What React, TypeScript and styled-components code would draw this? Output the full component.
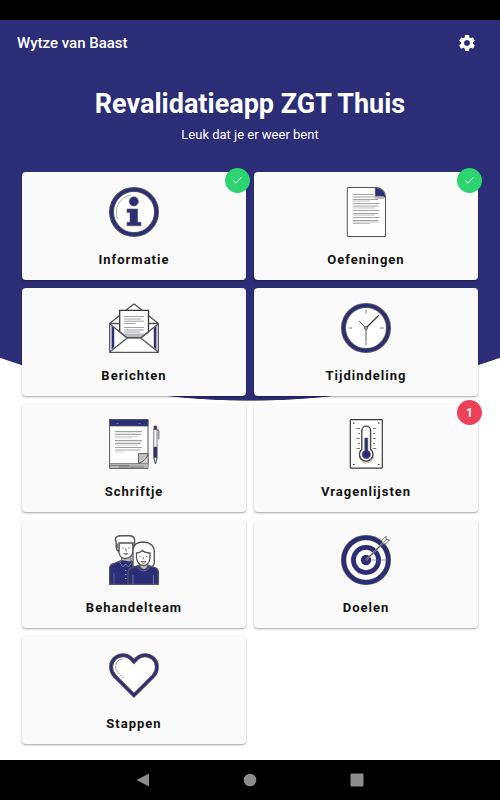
import React from "react";
import styled, { createGlobalStyle } from "styled-components";
import { MdSettings } from "react-icons/md";

const NAVY = "#2b2d77";
const INK = "#55555a";

const GlobalStyle = createGlobalStyle`
  *, *::before, *::after { box-sizing: border-box; }
  body {
    margin: 0;
    background: #000;
    font-family: Roboto, "Liberation Sans", sans-serif;
  }
  button { font: inherit; border: 0; padding: 0; background: none; cursor: pointer; }
`;

const Screen = styled.div`
  display: flex;
  flex-direction: column;
  min-height: 100vh;
`;

const StatusBar = styled.div`
  height: 20px;
  background: #000;
`;

const Main = styled.main`
  flex: 1;
  padding-bottom: 16px;
  background: radial-gradient(ellipse 150% 749px at 50% -368px, ${NAVY} 99.9%, #fff 100%);
`;

const TopBar = styled.header`
  display: flex;
  align-items: center;
  justify-content: space-between;
  height: 46px;
  padding: 0 23px 0 17px;
  color: #fff;
`;

const UserName = styled.span`
  font-size: 15px;
  line-height: 20px;
  font-weight: 500;
`;

const IconButton = styled.button`
  display: flex;
  color: #fff;
`;

const Intro = styled.section`
  padding-top: 22px;
  text-align: center;
  color: #fff;
`;

const Title = styled.h1`
  margin: 0;
  font-size: 27px;
  line-height: 32px;
  font-weight: 700;
`;

const Subtitle = styled.p`
  margin: 5px 0 0;
  font-size: 13px;
  line-height: 20px;
`;

const Grid = styled.nav`
  display: grid;
  grid-template-columns: 1fr 1fr;
  gap: 8px;
  padding: 27px 22px 0;
`;

const Card = styled.button`
  position: relative;
  display: flex;
  flex-direction: column;
  align-items: center;
  gap: 14px;
  height: 108px;
  padding-top: 15px;
  border-radius: 4px;
  background: #fafafa;
  box-shadow: 0 1px 2px rgba(0, 0, 0, 0.36);
`;

const CardLabel = styled.span`
  font-size: 13px;
  line-height: 18px;
  font-weight: 700;
  letter-spacing: 1px;
  color: #111;
`;

const Badge = styled.span<{ $color: string }>`
  position: absolute;
  top: -4px;
  right: -4px;
  display: flex;
  align-items: center;
  justify-content: center;
  width: 25px;
  height: 25px;
  border-radius: 50%;
  background: ${(p) => p.$color};
  color: #fff;
  font-size: 12px;
  font-weight: 700;
`;

const NavBar = styled.footer`
  display: flex;
  align-items: center;
  justify-content: center;
  gap: 93px;
  height: 40px;
  background: #000;
`;

const NavButton = styled.button`
  display: flex;
`;

const Drawing = styled.svg`
  display: block;
  width: 50px;
  height: 50px;
  overflow: visible;
`;

function Art({ children }: { children: React.ReactNode }) {
  return (
    <Drawing viewBox="0 0 50 50" fill="none" stroke={INK} aria-hidden="true">
      {children}
    </Drawing>
  );
}

const Ring = () => (
  <>
    <circle cx="25" cy="25" r="22.5" fill="#fff" stroke={INK} strokeWidth="5" />
    <circle cx="25" cy="25" r="22.5" stroke={NAVY} strokeWidth="3" />
  </>
);

const InfoIcon = () => (
  <Art>
    <Ring />
    <path d="M8.6 32A17.5 17.5 0 0 1 22 8" stroke="#777" strokeWidth=".6" />
    <circle cx="24.8" cy="14.4" r="4.6" fill={NAVY} strokeWidth=".6" />
    <path d="M18 22H28.6V35.3H32V38.8H18V35.3H21V25.4H18Z" fill={NAVY} strokeWidth=".6" />
  </Art>
);

const PageIcon = () => (
  <Art>
    <path d="M6.3.5H35Q44.5 1 44.5 11V49.5H6.3Z" fill="#fff" />
    <path d="M34.2.8Q43.6 1 44.4 10.5Q40 8.5 34.2 9.5Z" fill={NAVY} strokeWidth=".5" />
    <path d="M34 9.5H43V12H34Z" fill="#bbb" stroke="none" />
    <g stroke="#a4a4a4">
      <path d="M11.7 7.5H33M11.7 10H34M11.7 12.5H37M11.7 16.5H38.7M11.7 19H37.5M11.7 23.5H38.7M11.7 26.5H37.5M11.7 30.5H38.7M11.7 33.5H37.5" />
      <path d="M11.7 14H29M11.7 21H34M11.7 28H34M11.7 35H38M11.7 36.5H29" strokeWidth=".7" />
    </g>
  </Art>
);

const EnvelopeIcon = () => (
  <Art>
    <path d="M.7 20.5L23.5 2Q25 .5 26.5 2L49.3 20.5V49.3H.7Z" fill="#fff" strokeWidth="1.3" />
    <path d="M.7 20.5H49.3" strokeWidth="1.3" />
    <path d="M10.7 7.3H39.5V29L32 34.5H18L10.7 29Z" fill="#fff" stroke="#39393d" strokeWidth="1.3" />
    <path d="M12 30.5H38L32 34.5H18Z" fill="#bbb" stroke="none" />
    <path d="M15 13.5H35M15 16H32M15 18.2H35M15 20.5H26.5M15 24.5H35M15 27H35M15 29H31" stroke="#8c8c90" strokeWidth=".8" />
    <path d="M2.6 23L5.2 25V44L2.6 46.5ZM47.4 23L44.8 25V44L47.4 46.5Z" fill={NAVY} stroke="none" />
    <path d="M.9 21L18 34.8H32L49.1 21M1 48.8L18 35.2M49 48.8L32 35.2" strokeWidth="1.4" />
  </Art>
);

const ClockIcon = () => (
  <Art>
    <Ring />
    <path d="M25 7V10.5M25 39V42.5M7.5 25H11M39 25H42.5" strokeWidth=".8" />
    <path d="M25 25L37.7 12.3" stroke="#222" strokeWidth="1.1" />
    <path d="M25 25L18 18M25 25V38.5" strokeWidth="1" />
    <circle cx="25" cy="25" r="1.6" fill="#999" strokeWidth=".7" />
  </Art>
);

const NotepadIcon = () => (
  <Art>
    <path d="M.6.6H39V49.4H.6Z" fill="#fff" strokeWidth="1" />
    <path d="M1 44.5H39V49H1Z" fill="#b5b5b5" stroke="none" />
    <path d="M1 44.5H30M1 46.5H20M10 48H35" strokeWidth=".6" />
    <path d="M.6.6H39V7H.6Z" fill={NAVY} strokeWidth=".8" />
    <path d="M7 4.5H10M29 4.5H32" stroke="#777bb0" strokeWidth=".7" />
    <path d="M6 12.5H33M6 15.5H32M6 21.5H33M6 24.5H32M6 28.5H33M6 31H31" stroke="#98989b" strokeWidth=".9" />
    <path d="M6 14H32M6 17.5H29M6 19H23M6 23H33M6 26H28M6 33H15" stroke="#bcbcbf" strokeWidth=".7" />
    <path d="M29.5 34.5H39V36Q36 43 29.5 44.3Z" fill="#c2c2c2" strokeWidth=".9" />
    <path d="M29.5 44.3Q35.5 43 39 36V44.3Z" fill="#ddd" strokeWidth=".7" />
    <path d="M44.8 9.5H48V39L46.5 45L44.8 39Z" fill="#fff" strokeWidth=".8" />
    <path d="M45 7H47.8V10.5H45ZM44.8 28H48V38.5H44.8Z" fill={NAVY} strokeWidth=".6" />
    <path d="M48 11H49.8V20.5" strokeWidth=".9" />
    <path d="M44.8 38.5L46.5 44.8L48 38.5" strokeWidth=".7" />
  </Art>
);

const ThermometerIcon = () => (
  <Art>
    <rect x="9.3" y=".6" width="32" height="48.6" rx=".8" fill="#fff" stroke="#39393d" strokeWidth="1.2" />
    <g fill="#333" stroke="none">
      <circle cx="12.8" cy="4" r=".8" />
      <circle cx="37.8" cy="4" r=".8" />
      <circle cx="12.8" cy="45.5" r=".8" />
      <circle cx="37.8" cy="45.5" r=".8" />
    </g>
    <path d="M15.3 9.5H19M17 14.5H19M15.3 19.5H19M17 24.5H19M15.3 29.5H19M32 9.5H35.3M32 14.5H34M32 19.5H35.3M32 24.5H34M32 29.5H35.3" strokeWidth=".8" />
    <path d="M18.5 38Q20 44 25.3 44Q31 44 32.3 38" stroke="#b5b5b5" strokeWidth="1" />
    <path d="M20.8 11.5A4.4 4.4 0 0 1 29.6 11.5V30.2A6.8 6.8 0 1 1 20.8 30.2Z" fill="#fff" stroke="#444448" strokeWidth="1.4" />
    <path d="M23.8 19H26.8V31.6A4.2 4.2 0 1 1 23.8 31.6Z" fill={NAVY} strokeWidth=".6" />
  </Art>
);

const TeamIcon = () => (
  <Art>
    <path d="M.6 49.3V34Q.6 29.5 5 28.5L12.5 25.5H21L29 30V49.3Z" fill={NAVY} strokeWidth="1.3" />
    <path d="M12.5 22V26L16.5 30L22 26V20Z" fill="#b8b8b8" strokeWidth=".8" />
    <path d="M12.5 25L10.8 27.5L14 32L16.5 28.8L19.5 32L23 27" fill={NAVY} stroke="#8788a5" strokeWidth=".8" />
    <path d="M5 38V49" stroke="#8788a5" strokeWidth=".6" />
    <path d="M16.8 35V36M16.8 39V40M16.8 43V44" stroke="#c4c4d5" />
    <path d="M9.8 7V17Q11 23.5 16.5 23.5Q23 23 24 16V7Z" fill="#fff" strokeWidth="1.3" />
    <path d="M9.5 16.5Q7.2 15 7.2 12V7Q5.4 4 7.4 2Q9 .6 13 .7H20Q25.6 .8 25.6 5V10L24 12V8H10V16Z" fill="#fff" strokeWidth="1.4" />
    <path d="M8 8.5V13.5" strokeWidth="1.6" />
    <path d="M13 13H15M19 13H21M16.8 13V16H18M14.5 18.5H19Q17 21 14.5 18.5" strokeWidth=".7" />
    <path d="M24 31V15Q24.5 7 34.5 7Q45 8 45.3 16V28Q44.5 32.5 39 32.5H29Q25 33 24 31Z" fill="#fff" strokeWidth="1.4" />
    <path d="M19 49.3V37Q19.5 33 24 32.3L31 30H38L45 32.3Q49.4 33 49.4 38V49.3Z" fill={NAVY} strokeWidth="1.3" />
    <path d="M31 28V32Q35 36.5 38.5 32V28Z" fill="#b8b8b8" strokeWidth=".8" />
    <path d="M28.5 32Q34.5 40 40.8 32M24 40V49M44.5 40V49" stroke="#8788a5" strokeWidth=".8" />
    <path d="M27.5 18Q31 18 33.5 15.5Q36 18 41 18V23Q40 30.5 34.3 30.5Q28.5 30 27.5 23Z" fill="#fff" strokeWidth="1.3" />
    <path d="M30.3 21.5H31.5M37 21.5H38.2M34.3 22V24.5M32 26.5H37Q34.5 30 32 26.5Z" strokeWidth=".8" />
  </Art>
);

const TargetIcon = () => (
  <Art>
    <circle cx="25" cy="25" r="22.4" fill="#fff" strokeWidth="5.2" />
    <circle cx="25" cy="25" r="22.3" stroke={NAVY} strokeWidth="4" />
    <circle cx="25" cy="25" r="12.6" stroke={NAVY} strokeWidth="4.8" />
    <circle cx="25" cy="25" r="5.2" fill={NAVY} stroke="none" />
    <path d="M25 25H49" strokeWidth=".6" />
    <path d="M25 25L42 8" stroke="#ddd" strokeWidth="1.6" />
    <path d="M25 25L46 4" strokeWidth="1.1" />
    <path d="M41 8.8V5.2L45 1.2V4.8H48.6L44.6 8.8Z" fill="#fff" strokeWidth=".8" />
    <path d="M41 8.8L45 4.8" strokeWidth=".8" />
  </Art>
);

const HEART =
  "M25 44.3L5.8 25.2C.8 20 1 12 5.6 7.5C10.5 3 18 3.3 22 7.4L25 10.5L28 7.4C32 3.3 39.5 3 44.4 7.5C49 12 49.2 20 44.2 25.2Z";

const HeartIcon = () => (
  <Art>
    <path d={HEART} fill="#fff" strokeWidth="4" />
    <path d={HEART} stroke={NAVY} strokeWidth="2.2" />
    <path d="M13.5 8.2Q7 9 6.6 15.5Q6.6 18.5 8.5 21L14.5 27" strokeWidth=".7" strokeDasharray="2 .6" />
  </Art>
);

const CheckMark = () => (
  <svg width="11" height="9" viewBox="0 0 11 9" fill="none" stroke="#fff" role="img" aria-label="Voltooid">
    <path d="M1.5 4.8L4 7.2L9.5 1.2" />
  </svg>
);

type Item = { label: string; icon: React.ReactNode; done?: boolean; count?: number };

const items: Item[] = [
  { label: "Informatie", icon: <InfoIcon />, done: true },
  { label: "Oefeningen", icon: <PageIcon />, done: true },
  { label: "Berichten", icon: <EnvelopeIcon /> },
  { label: "Tijdindeling", icon: <ClockIcon /> },
  { label: "Schriftje", icon: <NotepadIcon /> },
  { label: "Vragenlijsten", icon: <ThermometerIcon />, count: 1 },
  { label: "Behandelteam", icon: <TeamIcon /> },
  { label: "Doelen", icon: <TargetIcon /> },
  { label: "Stappen", icon: <HeartIcon /> },
];

export default function App() {
  return (
    <Screen>
      <GlobalStyle />
      <StatusBar />
      <Main>
        <TopBar>
          <UserName>Wytze van Baast</UserName>
          <IconButton aria-label="Instellingen">
            <MdSettings size={20} />
          </IconButton>
        </TopBar>
        <Intro>
          <Title>Revalidatieapp ZGT Thuis</Title>
          <Subtitle>Leuk dat je er weer bent</Subtitle>
        </Intro>
        <Grid>
          {items.map((item) => (
            <Card key={item.label}>
              {item.icon}
              <CardLabel>{item.label}</CardLabel>
              {item.done && (
                <Badge $color="#2bd46f">
                  <CheckMark />
                </Badge>
              )}
              {item.count && <Badge $color="#ee4058">{item.count}</Badge>}
            </Card>
          ))}
        </Grid>
      </Main>
      <NavBar>
        <NavButton aria-label="Terug">
          <svg width="14" height="14" viewBox="0 0 14 14" fill="#8c8c8c">
            <path d="M13 .5V13.5L.5 7Z" />
          </svg>
        </NavButton>
        <NavButton aria-label="Start">
          <svg width="14" height="14" viewBox="0 0 14 14" fill="#8c8c8c">
            <circle cx="7" cy="7" r="6.3" />
          </svg>
        </NavButton>
        <NavButton aria-label="Overzicht">
          <svg width="14" height="14" viewBox="0 0 14 14" fill="#8c8c8c">
            <rect x=".5" y=".5" width="13" height="13" rx="1" />
          </svg>
        </NavButton>
      </NavBar>
    </Screen>
  );
}
